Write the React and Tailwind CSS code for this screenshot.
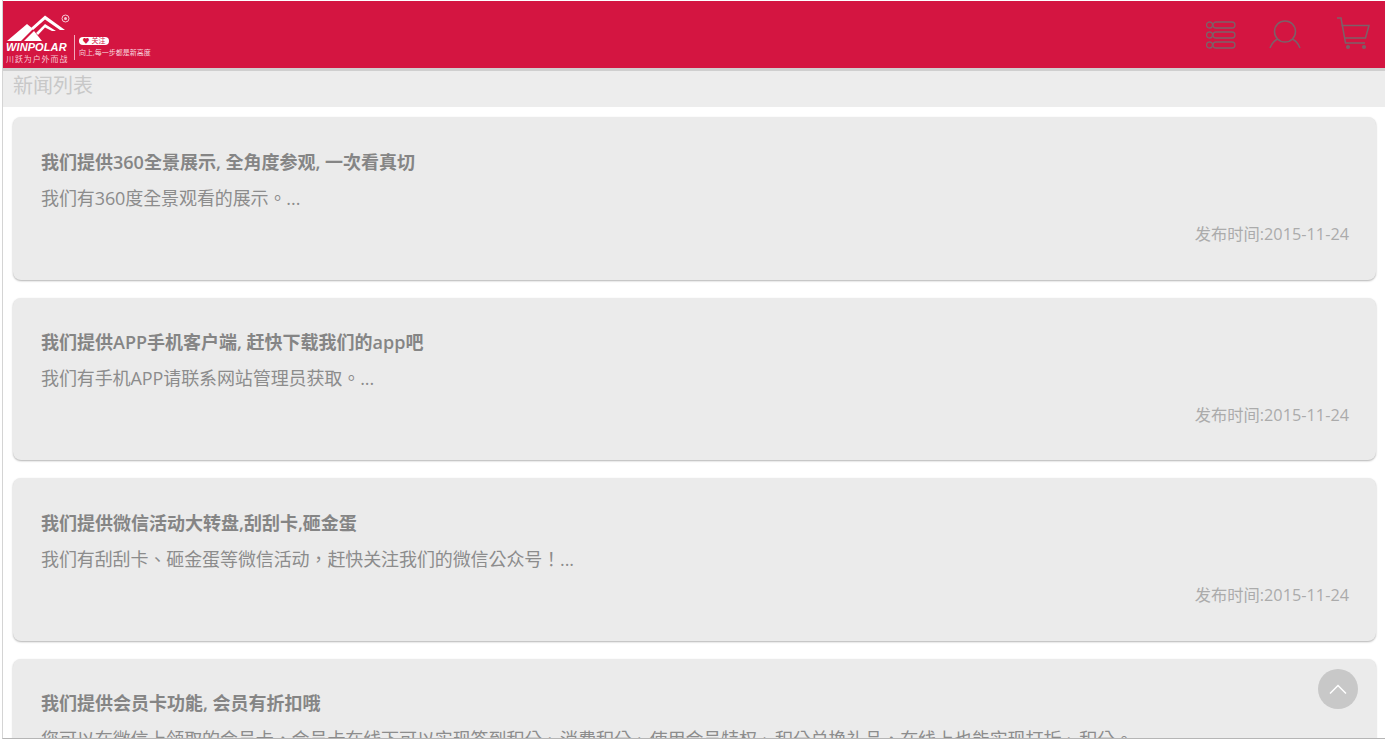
import React from 'react';

const news = [
    { title: '我们提供360全景展示, 全角度参观, 一次看真切', desc: '我们有360度全景观看的展示。...', date: '发布时间:2015-11-24' },
    { title: '我们提供APP手机客户端, 赶快下载我们的app吧', desc: '我们有手机APP请联系网站管理员获取。...', date: '发布时间:2015-11-24' },
    { title: '我们提供微信活动大转盘,刮刮卡,砸金蛋', desc: '我们有刮刮卡、砸金蛋等微信活动，赶快关注我们的微信公众号！...', date: '发布时间:2015-11-24' },
    { title: '我们提供会员卡功能, 会员有折扣哦', desc: '您可以在微信上领取的会员卡，会员卡在线下可以实现签到积分、消费积分、使用会员特权、积分兑换礼品，在线上也能实现打折、积分。', date: '发布时间:2015-11-24' },
];

function Logo() {
    return (
        <div className="flex items-start h-full w-[150px] relative">
            <div className="flex flex-col items-start pt-[14px] pl-[2px]">
                <svg width="66" height="27" viewBox="3 15 66 27" className="block">
                    <path d="M5 41 L25 24 L31 29 L19 41 Z" fill="#fff" />
                    <path d="M22 41 L32 31 L40 41 Z" fill="#fff" />
                    <path d="M29 28 L43 15.500 L63 30 L58 30 L43 19.500 L31 30 Z" fill="#fff" />
                    <path d="M34 33 L43 24 L54 31 L50 31 L43 27.500 L36 35 Z" fill="#fff" />
                </svg>
                <span className="block ml-[1px] text-[11px] leading-[11px] font-bold italic tracking-[0.1px] text-white font-['Liberation_Sans',sans-serif]">WINPOLAR</span>
                <span className="block ml-[1px] mt-[1px] text-[8px] leading-[9px] tracking-[0.9px] text-[#f6c9d4] whitespace-nowrap">川跃为户外而战</span>
            </div>
            <div className="w-px h-[25px] mt-[34px] ml-[3px] bg-[#f2a9bb]"></div>
            <div className="flex flex-col items-start pt-[36px] pl-[4px]">
                <span className="flex items-center justify-center w-[30px] h-[8px] rounded-full bg-white text-[7px] leading-[8px] text-[#d4153f] whitespace-nowrap">♥ 关注</span>
                <span className="block mt-[4px] text-[7px] leading-[8px] text-[#f9d7df] whitespace-nowrap">向上,每一步都是新高度</span>
            </div>
            <svg width="9" height="9" viewBox="0 0 9 9" className="absolute left-[58px] top-[13px]">
                <circle cx="4.500" cy="4.500" r="3.500" fill="none" stroke="#f6c9d4" strokeWidth="1" />
                <circle cx="4.500" cy="4.500" r="1.500" fill="#f6c9d4" />
            </svg>
        </div>
    );
}

function ListIcon() {
    return (
        <svg width="30" height="30" viewBox="0 0 30 30" fill="none" stroke="#7d6068" strokeWidth="1.300">
            <circle cx="3.500" cy="5" r="3" />
            <circle cx="3.500" cy="15" r="3" />
            <circle cx="3.500" cy="25" r="3" />
            <rect x="7" y="2" width="22" height="6" rx="3" />
            <rect x="7" y="12" width="22" height="6" rx="3" />
            <rect x="7" y="22" width="22" height="6" rx="3" />
        </svg>
    );
}

function UserIcon() {
    return (
        <svg width="32" height="30" viewBox="0 0 32 30" fill="none" stroke="#7d6068" strokeWidth="1.500">
            <circle cx="16" cy="11.500" r="10.500" />
            <path d="M1 28 C3 23 6 20 9 19" />
            <path d="M31 28 C29 23 26 20 23 19" />
        </svg>
    );
}

function CartIcon() {
    return (
        <svg width="34" height="34" viewBox="0 0 34 34" fill="none" stroke="#7d6068" strokeWidth="1.500">
            <path d="M1 1 H5 L9.500 26 H29" />
            <path d="M5.500 8.500 H33 L29.500 21 H8.500" />
            <circle cx="12" cy="30" r="1.300" fill="#7d6068" />
            <circle cx="28" cy="30" r="1.300" fill="#7d6068" />
        </svg>
    );
}

function NewsCard({ item }) {
    return (
        <div className="h-[162.500px] shrink-0 rounded-[8px] bg-[#ebebeb] pt-[32.900px] pl-[28px] pr-[27px] shadow-[0_1px_2px_rgba(0,0,0,0.3)]">
            <h3 className="text-[18px] leading-[24px] font-semibold text-[#858585] whitespace-nowrap">{item.title}</h3>
            <p className="mt-[12px] text-[18px] leading-[24px] text-[#8c8c8c] whitespace-nowrap tracking-[-0.1px]">{item.desc}</p>
            <p className="mt-[12.600px] text-right text-[16.300px] leading-[24px] text-[#ababab]">{item.date}</p>
        </div>
    );
}

export default function App() {
    return (
        <div className="relative h-[739px] overflow-hidden bg-white pl-[2px] font-['Open_Sans','Noto_Sans_CJK_TC',sans-serif]">
            <div className="flex flex-col h-full border-l border-[#d4d4d4] border-b border-b-[#b5b5b5] overflow-hidden">
                <header className="mt-px h-[67px] shrink-0 flex items-center justify-between bg-[#d41541]">
                    <Logo />
                    <div className="flex items-center pr-[15px]">
                        <ListIcon />
                        <div className="ml-[33px]"><UserIcon /></div>
                        <div className="ml-[35px] mt-[-2px]"><CartIcon /></div>
                    </div>
                </header>
                <div className="h-[3px] shrink-0 bg-[#cfcfcf]"></div>
                <div className="h-[36px] shrink-0 pl-[10px] bg-[#ededed] text-[20px] leading-[30px] text-[#c8c8c8]">新闻列表</div>
                <div className="flex flex-col gap-[18px] pt-[10px] pl-[10px] pr-[9px]">
                    {news.map((item) => <NewsCard key={item.title} item={item} />)}
                </div>
            </div>
            <button className="absolute left-[1318px] top-[669px] w-[40px] h-[40px] rounded-full bg-[#c8c8c8] flex items-center justify-center">
                <svg width="18" height="10" viewBox="0 0 18 10" fill="none" stroke="#fff" strokeWidth="1.500"><path d="M1 9.500 L9 1.500 L17 9.500" /></svg>
            </button>
        </div>
    );
}
